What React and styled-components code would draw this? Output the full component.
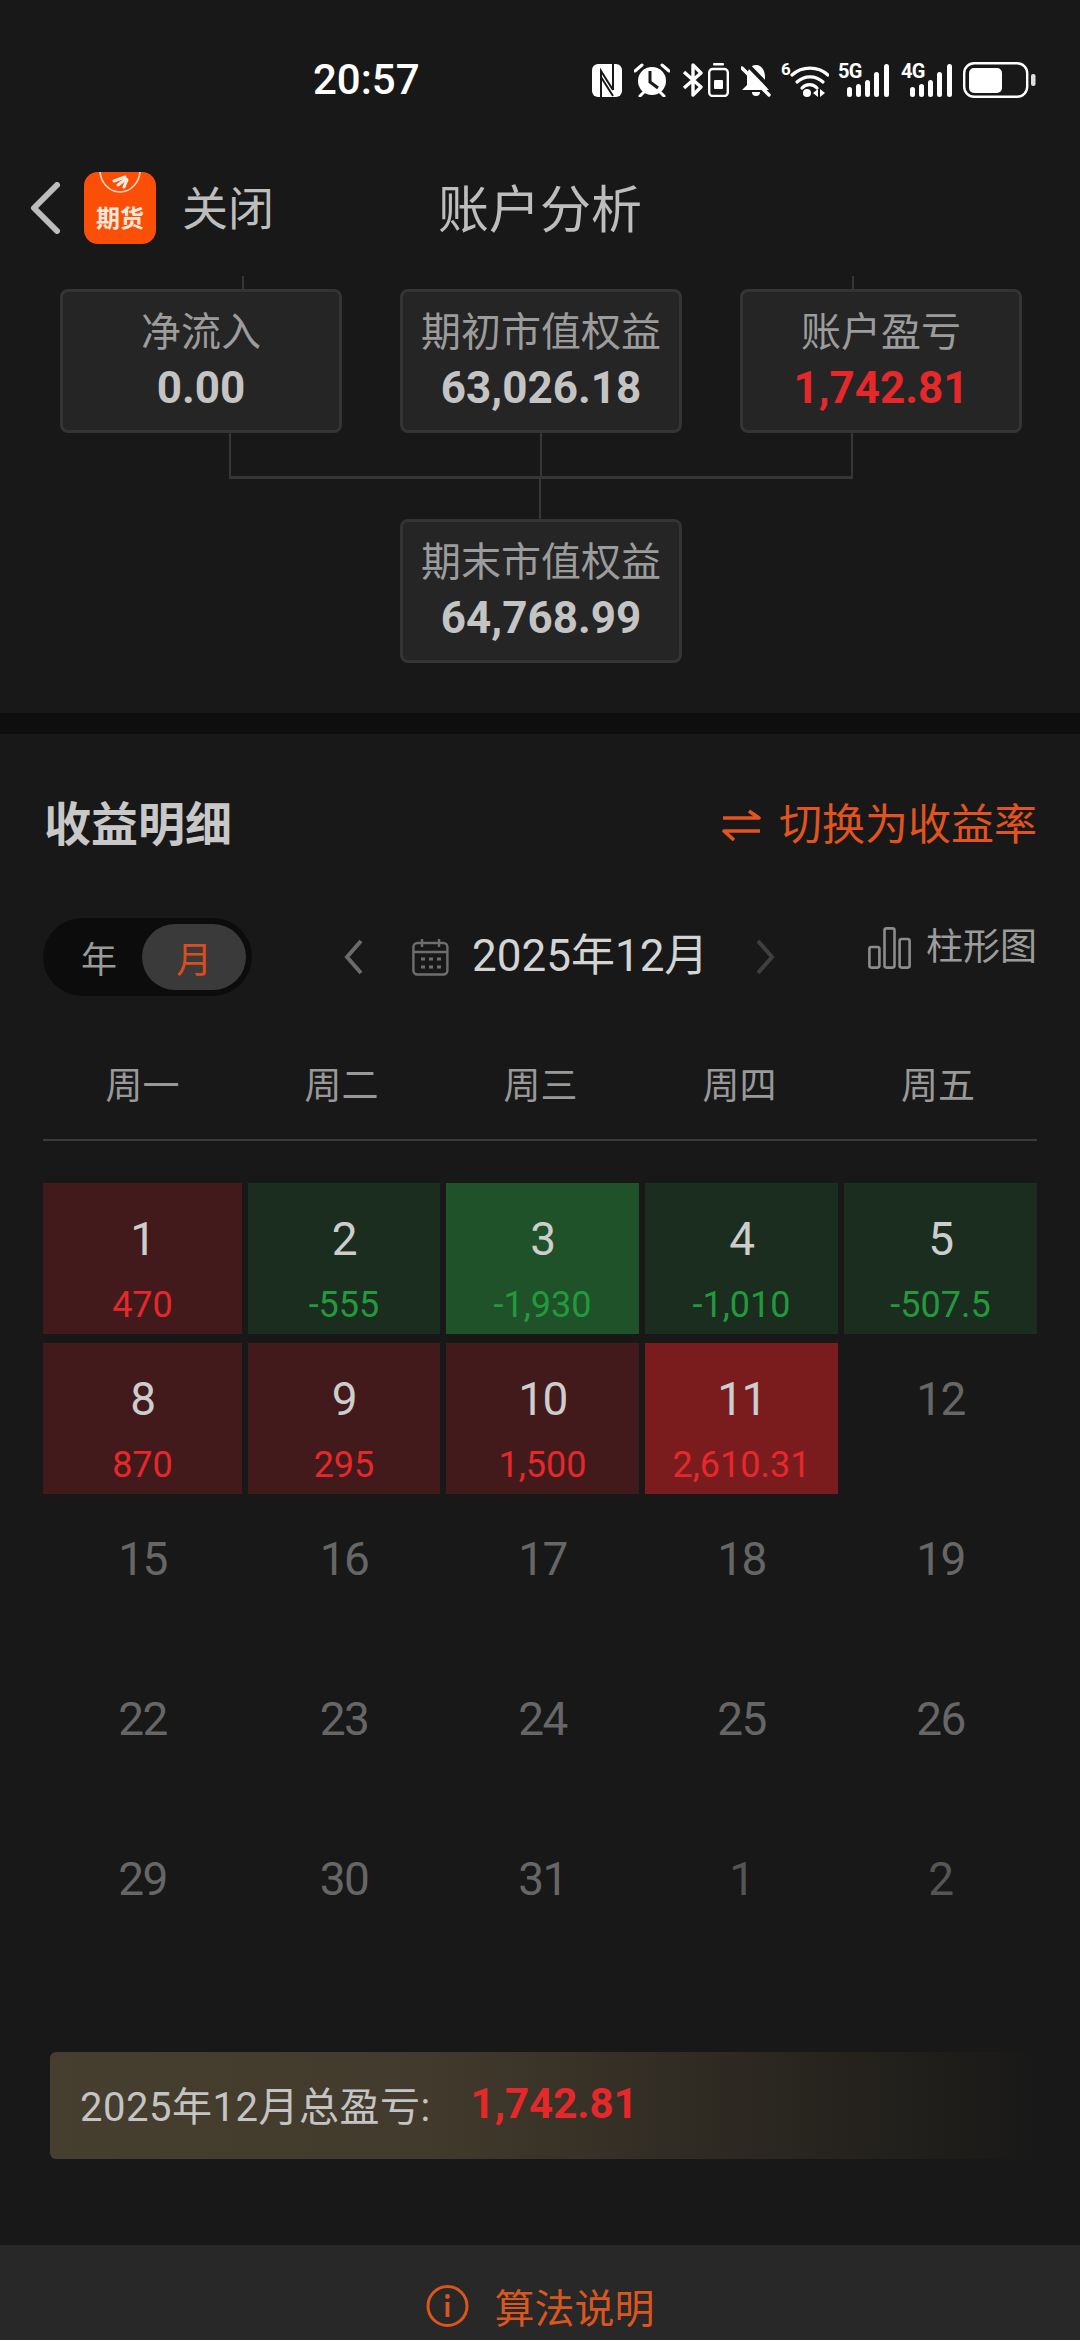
import React from 'react';
import styled, { createGlobalStyle } from 'styled-components';

const GlobalStyle = createGlobalStyle`
  html, body {
    margin: 0;
    padding: 0;
    background: #181818;
  }
  * {
    box-sizing: border-box;
  }
`;

const ORANGE = '#e2541f';
const LINE = '#363636';

const Page = styled.div`
  width: 1080px;
  height: 2340px;
  display: flex;
  flex-direction: column;
  overflow: hidden;
  background: #181818;
  font-family: Roboto, "Noto Sans CJK SC", sans-serif;
`;

const StatusBar = styled.div`
  height: 160px;
  display: flex;
  align-items: center;
  justify-content: space-between;
  padding: 0 43px 0 313px;
`;

const Clock = styled.span`
  font-size: 42px;
  font-weight: 500;
  color: #fff;
  line-height: 1;
`;

const StatusIcons = styled.div`
  display: flex;
  align-items: center;
`;

const Glyph = styled.svg`
  display: block;
  flex: none;
  margin-left: ${(p) => p.$gap}px;
`;

const TextGlyph = styled(Glyph)`
  margin-top: -6px;
`;

const Nav = styled.div`
  height: 96px;
  display: grid;
  grid-template-columns: 1fr auto 1fr;
  align-items: center;
`;

const NavLeft = styled.div`
  display: flex;
  align-items: center;
  padding-left: 30px;
`;

const Logo = styled.div`
  width: 72px;
  height: 72px;
  margin: 0 26px 0 24px;
  border-radius: 14px;
  background: #fb4f08;
  display: flex;
  flex-direction: column;
  align-items: center;
  overflow: hidden;
`;

const LogoArt = styled.svg`
  display: block;
  flex: none;
`;

const LogoText = styled.span`
  font-size: 24px;
  font-weight: 700;
  line-height: 26px;
  margin-top: 2px;
  color: #ffe9dd;
`;

const CloseText = styled.span`
  margin-top: 2px;
  font-size: 46px;
  line-height: 1;
  color: #bdbdbd;
`;

const Title = styled.span`
  margin-top: 4px;
  font-size: 51px;
  line-height: 1;
  color: #bdbdbd;
`;

const Tree = styled.section`
  padding: 20px 60px 50px;
  display: flex;
  flex-direction: column;
`;

const CardRow = styled.div`
  display: grid;
  grid-template-columns: repeat(3, 280px);
  column-gap: 60px;
`;

const Slot = styled.div`
  display: flex;
  flex-direction: column;
  align-items: stretch;
`;

const TopStem = styled.div`
  width: 2px;
  height: 13px;
  background: ${(p) => (p.$hidden ? 'transparent' : LINE)};
  margin-left: ${(p) => p.$left}px;
`;

const Card = styled.div`
  width: 282px;
  height: 144px;
  border: 3px solid #343434;
  border-radius: 8px;
  background: #252525;
  display: flex;
  flex-direction: column;
  align-items: center;
  padding-top: 19px;
`;

const CardLabel = styled.span`
  font-size: 40px;
  line-height: 44px;
  color: #9c9c9c;
`;

const CardValue = styled.span`
  font-size: 44px;
  line-height: 48px;
  margin-top: 9px;
  font-weight: 700;
  color: ${(p) => (p.$red ? '#e6282b' : '#c4c4c4')};
`;

const Bracket = styled.div`
  display: flex;
  margin-left: 169px;
  width: 624px;
  height: 46px;
`;

const BracketHalf = styled.div`
  flex: 1;
  border-bottom: 3px solid ${LINE};
  border-right: 2px solid ${LINE};
  border-left: ${(p) => (p.$first ? `2px solid ${LINE}` : 'none')};
`;

const MidStem = styled.div`
  width: 2px;
  height: 40px;
  margin-left: 479px;
  background: ${LINE};
`;

const CenterCard = styled(Card)`
  margin-left: 340px;
`;

const Band = styled.div`
  height: 21px;
  background: #0e0e0e;
`;

const Detail = styled.section`
  padding: 0 43px;
  display: flex;
  flex-direction: column;
`;

const HeadRow = styled.div`
  display: flex;
  align-items: center;
  justify-content: space-between;
  margin-top: 67px;
  height: 48px;
`;

const HeadTitle = styled.h2`
  margin: 0 0 0 1px;
  font-size: 47px;
  line-height: 48px;
  font-weight: 700;
  color: #c8c8c8;
`;

const SwitchLink = styled.div`
  display: flex;
  align-items: center;
  gap: 18px;
  font-size: 43px;
  line-height: 48px;
  color: ${ORANGE};
`;

const Controls = styled.div`
  display: flex;
  align-items: center;
  height: 78px;
  margin-top: 69px;
`;

const Toggle = styled.div`
  width: 209px;
  height: 78px;
  padding: 6px 6px 6px 21px;
  border-radius: 39px;
  background: #0c0c0c;
  display: flex;
  align-items: center;
  justify-content: space-between;
`;

const ToggleItem = styled.span`
  flex: none;
  width: ${(p) => (p.$active ? '104px' : '70px')};
  height: 66px;
  border-radius: 33px;
  display: flex;
  align-items: center;
  justify-content: center;
  font-size: 36px;
  color: ${(p) => (p.$active ? '#d94e1f' : '#9a9a9a')};
  background: ${(p) => (p.$active ? '#3a3a3a' : 'transparent')};
`;

const Chevron = styled.svg`
  display: block;
  flex: none;
  margin-left: ${(p) => p.$left}px;
`;

const MonthIcon = styled.svg`
  display: block;
  margin-left: 48px;
`;

const MonthText = styled.span`
  width: 230px;
  margin: -2px 0 0 23px;
  font-size: 44px;
  line-height: 1;
  color: #d4d4d4;
  white-space: nowrap;
`;

const ChartSwitch = styled.div`
  display: flex;
  align-items: center;
  gap: 15px;
  margin: -18px 0 0 auto;
  font-size: 37px;
  line-height: 42px;
  color: #9c9c9c;
`;

const WeekRow = styled.div`
  display: grid;
  grid-template-columns: 199px 199px 199px 199px 198px;
  margin-top: 69px;
  height: 76px;
  border-bottom: 2px solid #3b3b3b;
`;

const WeekDay = styled.span`
  font-size: 37px;
  line-height: 44px;
  text-align: center;
  color: #999;
`;

const CalendarGrid = styled.div`
  display: grid;
  grid-template-columns: 199px 192px 193px 193px 193px;
  grid-auto-rows: 151px;
  gap: 9px 6px;
  margin-top: 42px;
`;

const toneColors = {
  red: '#421a1b',
  deepRed: '#7a1c1e',
  green: '#1a2d1e',
  deepGreen: '#1f5229',
  none: 'transparent',
};

const Cell = styled.div`
  display: flex;
  flex-direction: column;
  align-items: center;
  padding-top: 33px;
  background: ${(p) => toneColors[p.$tone]};
`;

const DayNum = styled.span`
  font-size: 46px;
  line-height: 46px;
  font-weight: 400;
  letter-spacing: -1.5px;
  color: ${(p) => p.$color};
`;

const DayValue = styled.span`
  font-size: 36px;
  line-height: 36px;
  margin-top: 25px;
  font-weight: 400;
  color: ${(p) => (p.$tone === 'green' || p.$tone === 'deepGreen' ? '#229a3b' : '#e6282b')};
`;

const TotalBar = styled.div`
  height: 107px;
  margin: 78px 0 0 7px;
  padding: 0 0 4px 30px;
  border-radius: 6px;
  background: linear-gradient(90deg, #463e2e 0%, #423a2c 38%, #1c1b19 95%, #181818 100%);
  display: flex;
  align-items: center;
`;

const TotalLabel = styled.span`
  font-size: 40px;
  letter-spacing: 0.5px;
  color: #c4c4c4;
`;

const TotalValue = styled.span`
  margin-left: 40px;
  font-size: 42px;
  font-weight: 700;
  color: #e6282b;
`;

const Footer = styled.footer`
  margin-top: auto;
  height: 95px;
  background: #282828;
  display: flex;
  align-items: center;
  justify-content: center;
  gap: 26px;
  padding-top: 27px;
  font-size: 40px;
  color: #d9571f;
`;

const weekDays = ['周一', '周二', '周三', '周四', '周五'];

const days = [
  { day: 1, value: '470', tone: 'red' },
  { day: 2, value: '-555', tone: 'green' },
  { day: 3, value: '-1,930', tone: 'deepGreen' },
  { day: 4, value: '-1,010', tone: 'green' },
  { day: 5, value: '-507.5', tone: 'green' },
  { day: 8, value: '870', tone: 'red' },
  { day: 9, value: '295', tone: 'red' },
  { day: 10, value: '1,500', tone: 'red' },
  { day: 11, value: '2,610.31', tone: 'deepRed' },
  { day: 12 }, { day: 15 }, { day: 16 }, { day: 17 }, { day: 18 }, { day: 19 },
  { day: 22 }, { day: 23 }, { day: 24 }, { day: 25 }, { day: 26 },
  { day: 29 }, { day: 30 }, { day: 31 },
  { day: 1, next: true }, { day: 2, next: true },
];

function NfcIcon() {
  return (
    <Glyph $gap={0} width="30" height="33" viewBox="0 0 30 33">
      <rect width="30" height="33" rx="6" fill="#fff" />
      <path d="M9 33V7l12 19M21 0v26M9 13l12 19" fill="none" stroke="#181818" strokeWidth="2" />
    </Glyph>
  );
}

function AlarmIcon() {
  return (
    <Glyph $gap={12} width="36" height="34" viewBox="0 0 36 34">
      <circle cx="18" cy="18" r="14" fill="#fff" />
      <path d="M16 8v11l8 6" fill="none" stroke="#181818" strokeWidth="3" />
      <path d="M1 8l7-6M35 8l-7-6M6 33l4-4M30 33l-4-4" fill="none" stroke="#fff" strokeWidth="3" strokeLinecap="round" />
    </Glyph>
  );
}

function BluetoothIcon() {
  return (
    <Glyph $gap={12} width="21" height="34" viewBox="0 0 21 34">
      <path d="M2 9l17 15-8 8V2l8 8L2 25" fill="none" stroke="#fff" strokeWidth="3.4" strokeLinejoin="round" />
    </Glyph>
  );
}

function PhoneCellIcon() {
  return (
    <Glyph $gap={5} width="21" height="34" viewBox="0 0 21 34">
      <rect x="5" y="0" width="11" height="2.6" rx="1" fill="#fff" />
      <rect x="1.2" y="6" width="18.6" height="27" rx="3.5" fill="none" stroke="#fff" strokeWidth="2.4" />
      <rect x="6" y="17" width="9" height="9" rx="1" fill="#fff" />
    </Glyph>
  );
}

function BellOffIcon() {
  return (
    <Glyph $gap={12} width="30" height="34" viewBox="0 0 30 34">
      <path d="M15 2C9 2 6 8 6 14v8l-5 5h27l-4-5V14C24 8 21 2 15 2z" fill="#fff" />
      <path d="M11 29h8a4 4 0 0 1-8 0z" fill="#fff" />
      <path d="M4 -1L34 30" stroke="#181818" strokeWidth="4" />
      <path d="M1 5l27 27" stroke="#fff" strokeWidth="3.4" strokeLinecap="round" />
    </Glyph>
  );
}

function WifiIcon() {
  return (
    <TextGlyph $gap={10} width="48" height="40" viewBox="0 -6 48 40">
      <text x="0" y="12" fontSize="17" fontWeight="700" fill="#fff" fontFamily="Roboto">6</text>
      <g fill="none" stroke="#fff" strokeWidth="3.2" strokeLinecap="round">
        <path d="M11 12a27 27 0 0 1 36 0" />
        <path d="M16 19a19 19 0 0 1 26 0" />
        <path d="M21 25a10 10 0 0 1 15 0" />
      </g>
      <circle cx="26" cy="30" r="4" fill="#fff" />
      <path d="M32 30l5-4v8zM39 26l5 4-5 4z" fill="#fff" />
    </TextGlyph>
  );
}

function SignalIcon({ label, gap }) {
  const bars = [
    { x: 9, h: 10 },
    { x: 18, h: 13 },
    { x: 27, h: 17 },
    { x: 36, h: 25 },
    { x: 46, h: 33 },
  ];
  return (
    <TextGlyph $gap={gap} width="51" height="40" viewBox="0 -6 51 40">
      <text x="0" y="15" fontSize="20" fontWeight="700" fill="#fff" fontFamily="Roboto" letterSpacing="-0.8">{label}</text>
      {bars.map((b) => (
        <rect key={b.x} x={b.x} y={34 - b.h} width="5" height={b.h} rx="2.5" fill="#fff" />
      ))}
    </TextGlyph>
  );
}

function BatteryIcon() {
  return (
    <Glyph $gap={11} width="74" height="36" viewBox="0 0 74 36">
      <rect x="1.2" y="1.2" width="63" height="33.6" rx="10" fill="none" stroke="#fff" strokeWidth="2.4" />
      <rect x="6" y="6" width="33" height="25" rx="5" fill="#fff" />
      <rect x="68" y="12" width="4.5" height="12" rx="2" fill="#ddd" />
    </Glyph>
  );
}

export default function App() {
  return (
    <Page>
      <GlobalStyle />
      <StatusBar>
        <Clock>20:57</Clock>
        <StatusIcons>
          <NfcIcon />
          <AlarmIcon />
          <BluetoothIcon />
          <PhoneCellIcon />
          <BellOffIcon />
          <WifiIcon />
          <SignalIcon label="5G" gap={9} />
          <SignalIcon label="4G" gap={12} />
          <BatteryIcon />
        </StatusIcons>
      </StatusBar>

      <Nav>
        <NavLeft>
          <svg width="30" height="52" viewBox="0 0 30 52">
            <path d="M27 3L4 26l23 23" fill="none" stroke="#bdbdbd" strokeWidth="6" strokeLinecap="round" strokeLinejoin="round" />
          </svg>
          <Logo>
            <LogoArt width="72" height="32" viewBox="0 0 72 32">
              <path d="M16 -2a20 22 0 0 0 40 0" fill="none" stroke="#ffd9c6" strokeWidth="1.6" />
              <g fill="none" stroke="#ffeee4" strokeWidth="3" strokeLinecap="round">
                <path d="M41 5L30 9" />
                <path d="M42 7l-8 6" />
                <path d="M43 8l-3 7" />
              </g>
            </LogoArt>
            <LogoText>期货</LogoText>
          </Logo>
          <CloseText>关闭</CloseText>
        </NavLeft>
        <Title>账户分析</Title>
        <span />
      </Nav>

      <Tree>
        <CardRow>
          <Slot>
            <TopStem $left={182} />
            <Card>
              <CardLabel>净流入</CardLabel>
              <CardValue>0.00</CardValue>
            </Card>
          </Slot>
          <Slot>
            <TopStem $hidden $left={0} />
            <Card>
              <CardLabel>期初市值权益</CardLabel>
              <CardValue>63,026.18</CardValue>
            </Card>
          </Slot>
          <Slot>
            <TopStem $left={112} />
            <Card>
              <CardLabel>账户盈亏</CardLabel>
              <CardValue $red>1,742.81</CardValue>
            </Card>
          </Slot>
        </CardRow>
        <Bracket>
          <BracketHalf $first />
          <BracketHalf />
        </Bracket>
        <MidStem />
        <CenterCard>
          <CardLabel>期末市值权益</CardLabel>
          <CardValue>64,768.99</CardValue>
        </CenterCard>
      </Tree>

      <Band />

      <Detail>
        <HeadRow>
          <HeadTitle>收益明细</HeadTitle>
          <SwitchLink>
            <svg width="39" height="32" viewBox="0 0 39 32">
              <path d="M1 9h36L27 2M38 22H2l10 9" fill="none" stroke={ORANGE} strokeWidth="3.6" strokeLinejoin="round" />
            </svg>
            切换为收益率
          </SwitchLink>
        </HeadRow>

        <Controls>
          <Toggle>
            <ToggleItem>年</ToggleItem>
            <ToggleItem $active>月</ToggleItem>
          </Toggle>
          <Chevron $left={91} width="21" height="36" viewBox="0 0 21 36">
            <path d="M18 2L4 18l14 16" fill="none" stroke="#6b6b6b" strokeWidth="4" />
          </Chevron>
          <MonthIcon width="37" height="38" viewBox="0 0 37 38">
            <g fill="none" stroke="#6e6e6e" strokeWidth="2.4">
              <rect x="1.4" y="5" width="34" height="31.5" rx="4" />
              <path d="M1.4 14h34M10 1v8M27 1v8" />
              <path d="M9 21h4M17 21h4M25 21h4M9 29h4M17 29h4M25 29h4" strokeWidth="3" />
            </g>
          </MonthIcon>
          <MonthText>2025年12月</MonthText>
          <Chevron $left={53} width="21" height="36" viewBox="0 0 21 36">
            <path d="M3 2l14 16L3 34" fill="none" stroke="#3f3f3f" strokeWidth="4" />
          </Chevron>
          <ChartSwitch>
            <svg width="43" height="42" viewBox="0 0 43 42">
              <g fill="none" stroke="#8c8c8c" strokeWidth="2.6">
                <rect x="1.4" y="20" width="10" height="20.6" rx="2" />
                <rect x="16.5" y="1.4" width="10" height="39.2" rx="2" />
                <rect x="31.6" y="12" width="10" height="28.6" rx="2" />
              </g>
            </svg>
            柱形图
          </ChartSwitch>
        </Controls>

        <WeekRow>
          {weekDays.map((d) => (
            <WeekDay key={d}>{d}</WeekDay>
          ))}
        </WeekRow>

        <CalendarGrid>
          {days.map((d, i) => (
            <Cell key={i} $tone={d.tone || 'none'}>
              <DayNum $color={d.tone ? '#cdcdcd' : d.next ? '#555' : '#666'}>{d.day}</DayNum>
              {d.value && <DayValue $tone={d.tone}>{d.value}</DayValue>}
            </Cell>
          ))}
        </CalendarGrid>

        <TotalBar>
          <TotalLabel>2025年12月总盈亏:</TotalLabel>
          <TotalValue>1,742.81</TotalValue>
        </TotalBar>
      </Detail>

      <Footer>
        <svg width="43" height="44" viewBox="0 0 43 44">
          <circle cx="21.5" cy="22" r="19.5" fill="none" stroke="#d9571f" strokeWidth="3" />
          <rect x="19.6" y="18" width="3.8" height="15" fill="#d9571f" />
          <circle cx="21.5" cy="12.5" r="2.4" fill="#d9571f" />
        </svg>
        算法说明
      </Footer>
    </Page>
  );
}
